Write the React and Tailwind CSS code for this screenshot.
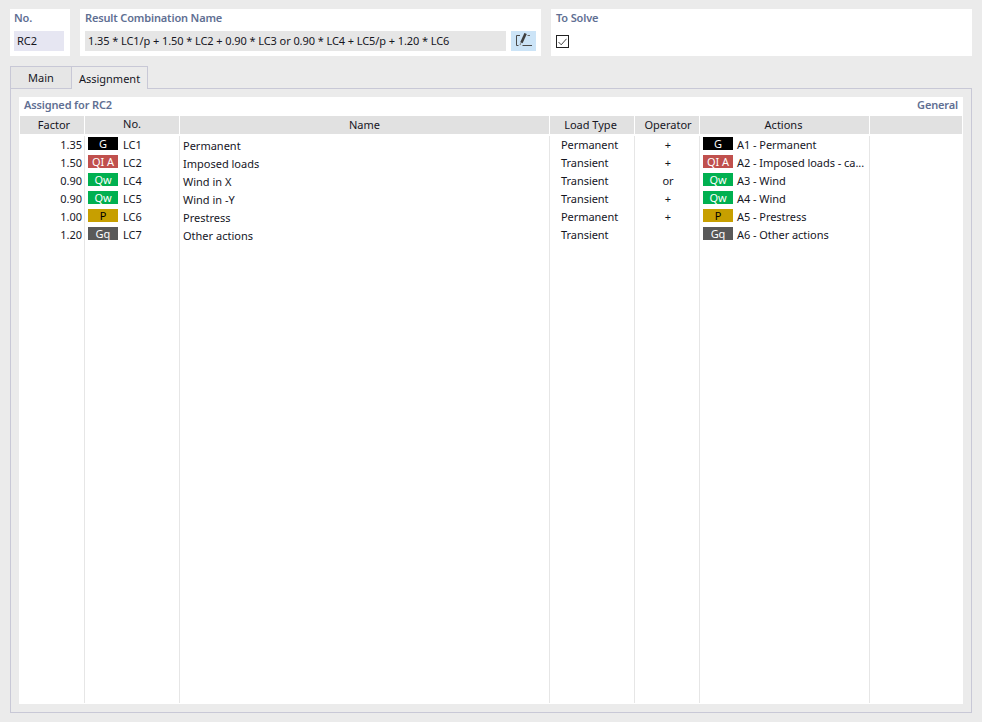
import React from "react";

const rows = [
  { factor: "1.35", badge: "G", color: "bg-[#000000]", text: "text-white", no: "LC1", name: "Permanent", type: "Permanent", op: "+", action: "A1 - Permanent" },
  { factor: "1.50", badge: "QI A", color: "bg-[#c0504d]", text: "text-white", no: "LC2", name: "Imposed loads", type: "Transient", op: "+", action: "A2 - Imposed loads - ca..." },
  { factor: "0.90", badge: "Qw", color: "bg-[#00b050]", text: "text-white", no: "LC4", name: "Wind in X", type: "Transient", op: "or", action: "A3 - Wind" },
  { factor: "0.90", badge: "Qw", color: "bg-[#00b050]", text: "text-white", no: "LC5", name: "Wind in -Y", type: "Transient", op: "+", action: "A4 - Wind" },
  { factor: "1.00", badge: "P", color: "bg-[#c79f00]", text: "text-black", no: "LC6", name: "Prestress", type: "Permanent", op: "+", action: "A5 - Prestress" },
  { factor: "1.20", badge: "Gq", color: "bg-[#595959]", text: "text-white", no: "LC7", name: "Other actions", type: "Transient", op: "", action: "A6 - Other actions" },
];

const headers = [
  { title: "Factor", width: "w-[65px]", extra: "pl-1" },
  { title: "No.", width: "w-[95px]", extra: "pb-[2px]" },
  { title: "Name", width: "w-[370px]", extra: "" },
  { title: "Load Type", width: "w-[85px]", extra: "pr-[3px]" },
  { title: "Operator", width: "w-[65px]", extra: "pl-[2px]" },
  { title: "Actions", width: "w-[170px]", extra: "pr-[2px]" },
  { title: "", width: "flex-1", extra: "" },
];

const Badge = ({ row }) => (
  <span className={`${row.color} ${row.text} mb-[3px] flex h-[13px] w-[30px] shrink-0 items-center justify-center overflow-hidden leading-none`}>
    {row.badge}
  </span>
);

const Column = ({ width, children, className = "" }) => (
  <div className={`${width} flex flex-col border-r border-[#e6e6e6] last:border-r-0 ${className}`}>{children}</div>
);

const Cell = ({ children, className = "" }) => (
  <div className={`flex h-[18px] items-center whitespace-nowrap ${className}`}>{children}</div>
);

const Panel = ({ title, className = "", titleClass = "pl-[5px]", children }) => (
  <div className={`h-[47px] bg-white ${className}`}>
    <div className={`h-[22px] pt-px text-[11px] leading-[15px] font-semibold tracking-[-0.15px] text-[#5f6f93] ${titleClass}`}>{title}</div>
    {children}
  </div>
);

const EditIcon = () => (
  <svg className="mb-[2px]" width="16" height="14" viewBox="0 0 16 14" fill="none">
    <path d="M4 2.5H0.5V12.5H2.5" stroke="#4a4a4a" />
    <path d="M6.5 12.5H16" stroke="#4a4a4a" />
    <path d="M9.6 0.5L5.4 9.8" stroke="#3f3f3f" strokeWidth="2.6" />
    <path d="M4.8 10.2L4 12" stroke="#8a8a8a" strokeWidth="1.2" />
    <path d="M11.5 2.5H14" stroke="#6a6a6a" />
  </svg>
);

export default function App() {
  return (
    <div className="flex h-[722px] w-[982px] flex-col overflow-hidden bg-[#ebebeb] px-[10px] pt-[9px] font-['Noto_Sans','Open_Sans',sans-serif] text-[11px] text-[#16161f]">
      <div className="flex gap-[10px]">
        <Panel title="No." className="w-[60px]" titleClass="pl-1">
          <div className="ml-1 mr-[6px] flex h-5 items-center bg-[#e6e6f2] pl-[3px]">RC2</div>
        </Panel>
        <Panel title="Result Combination Name" className="w-[461px]">
          <div className="mx-[5px] flex gap-[5px]">
            <div className="flex h-5 w-[421px] items-center bg-[#e6e6e6] pl-[3px] tracking-[-0.085px] whitespace-nowrap">
              1.35 * LC1/p + 1.50 * LC2 + 0.90 * LC3 or 0.90 * LC4 + LC5/p + 1.20 * LC6
            </div>
            <div className="flex h-5 w-[25px] items-center justify-center bg-[#cce4f7]">
              <EditIcon />
            </div>
          </div>
        </Panel>
        <Panel title="To Solve" className="w-[421px]">
          <div className="pl-[5px] pt-1">
            <div className="flex h-[13px] w-[13px] items-center justify-center border border-[#222222]">
              <svg width="9" height="8" viewBox="0 0 9 8" fill="none">
                <path d="M0.5 4L3.2 6.8L8.5 0.8" stroke="#444444" />
              </svg>
            </div>
          </div>
        </Panel>
      </div>

      <div className="mt-[10px] flex h-[22px] items-end">
        <div className="flex h-[22px] w-[62px] items-center justify-center border border-b-0 border-[#c8c8d6] bg-[#e6e6e6] pt-px">Main</div>
        <div className="relative z-10 -ml-px -mb-px flex h-[23px] w-[77px] items-center justify-center border border-b-0 border-[#c8c8d6] bg-[#ebebeb] pt-[2px]">Assignment</div>
      </div>

      <div className="flex h-[625px] w-[962px] flex-col border border-[#c8c8d6] p-2">
        <div className="flex h-full flex-col bg-white">
          <div className="flex h-[19px] items-start justify-between px-[5px] font-semibold leading-[15px] tracking-[-0.15px] text-[#5f6f93]">
            <span>Assigned for RC2</span>
            <span>General</span>
          </div>
          <div className="mx-px flex h-[18px] bg-[#e1e1e1]">
            {headers.map((h) => (
              <div key={h.title} className={`${h.width} ${h.extra} flex items-center justify-center border-r border-white last:border-r-0`}>
                {h.title}
              </div>
            ))}
          </div>
          <div className="mx-px flex flex-1 pt-[2px] pb-px">
            <Column width={headers[0].width}>
              {rows.map((r) => (
                <Cell key={r.no} className="justify-end pr-[2px]">{r.factor}</Cell>
              ))}
            </Column>
            <Column width={headers[1].width}>
              {rows.map((r) => (
                <Cell key={r.no} className="gap-[5px] pl-[3px]"><Badge row={r} />{r.no}</Cell>
              ))}
            </Column>
            <Column width={headers[2].width}>
              {rows.map((r) => (
                <Cell key={r.no} className="pl-[3px] pt-[2px]">{r.name}</Cell>
              ))}
            </Column>
            <Column width={headers[3].width}>
              {rows.map((r) => (
                <Cell key={r.no} className="pl-[11px] tracking-[-0.05px]">{r.type}</Cell>
              ))}
            </Column>
            <Column width={headers[4].width}>
              {rows.map((r) => (
                <Cell key={r.no} className="justify-center pl-[2px]">{r.op}</Cell>
              ))}
            </Column>
            <Column width={headers[5].width}>
              {rows.map((r) => (
                <Cell key={r.no} className="gap-1 pl-[3px] tracking-[-0.05px]"><Badge row={r} />{r.action}</Cell>
              ))}
            </Column>
            <Column width={headers[6].width} />
          </div>
        </div>
      </div>
    </div>
  );
}
